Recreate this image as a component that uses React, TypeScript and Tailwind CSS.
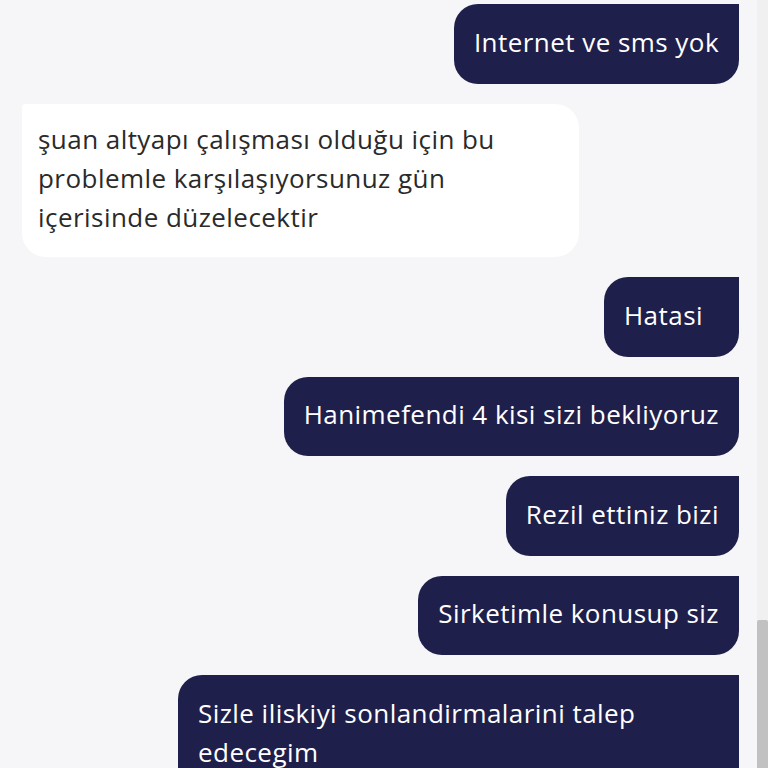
import React from "react";

const font = { fontFamily: "'Open Sans', Lato, sans-serif" };

function Sent({ text, extra = "" }: { text: string; extra?: string }) {
  return (
    <div className="flex justify-end">
      <div
        className={`max-w-[561px] bg-[#1f1f4b] text-white text-[26px] tracking-[0.45px] leading-[39px] pt-[18.5px] pb-[22px] pl-[20px] pr-[20px] rounded-[24px] rounded-tr-none ${extra}`}
      >
        {text}
      </div>
    </div>
  );
}

function Received({ text }: { text: string }) {
  return (
    <div className="flex justify-start">
      <div className="max-w-[557px] bg-white text-[#2a2a2a] text-[26px] tracking-[0.45px] leading-[39px] pt-[16.5px] pb-[20px] pl-[16px] pr-[20px] rounded-[24px] rounded-tl-[4px]">
        {text}
      </div>
    </div>
  );
}

export default function App() {
  return (
    <div className="w-[768px] h-[768px] overflow-hidden bg-[#f6f6f8] flex" style={font}>
      <div className="flex-1 flex flex-col gap-[20px] pl-[22px] pr-[18px] pt-[4px]">
        <Sent text="Internet ve sms yok" />
        <Received text="şuan altyapı çalışması olduğu için bu problemle karşılaşıyorsunuz gün içerisinde düzelecektir" />
        <Sent text="Hatasi" extra="!pr-[36px]" />
        <Sent text="Hanimefendi 4 kisi sizi bekliyoruz" />
        <Sent text="Rezil ettiniz bizi" />
        <Sent text="Sirketimle konusup siz" />
        <Sent text="Sizle iliskiyi sonlandirmalarini talep edecegim" />
      </div>
      <div className="w-[11px] bg-[#f0f0f0] flex flex-col">
        <div className="mt-[620px] flex-1 bg-[#c1c1c1] rounded-t-[2px]" />
      </div>
    </div>
  );
}
